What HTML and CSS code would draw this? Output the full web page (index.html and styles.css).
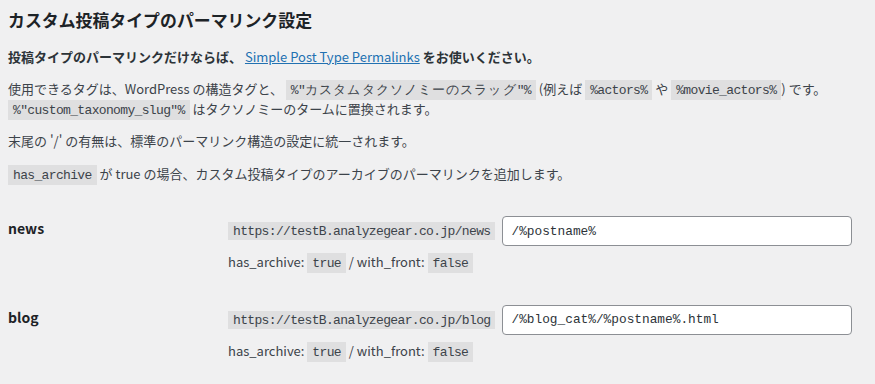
FILE: index.html
```html
<!DOCTYPE html>
<html lang="ja">
<head>
    <meta charset="UTF-8">
    <meta name="viewport" content="width=device-width, initial-scale=1.0">
    <title>カスタム投稿タイプのパーマリンク設定</title>
    <link rel="stylesheet" href="styles.css">
</head>
<body>

<div class="wrap">
    <h2>カスタム投稿タイプのパーマリンク設定</h2>
    <p><strong>投稿タイプのパーマリンクだけならば、 <a href="#">Simple Post Type Permalinks</a> をお使いください。</strong></p>
    <p>使用できるタグは、WordPress の構造タグと、 <code>%"<span class="jp">カスタムタクソノミーのスラッグ</span>"%</code> (例えば <code>%actors%</code> や <code>%movie_actors%</code>) です。 <code>%"custom_taxonomy_slug"%</code> はタクソノミーのタームに置換されます。</p>
    <p>末尾の '/' の有無は、標準のパーマリンク構造の設定に統一されます。</p>
    <p><code>has_archive</code> が true の場合、カスタム投稿タイプのアーカイブのパーマリンクを追加します。</p>

    <table class="form-table">
        <tbody>
            <tr>
                <th><label for="news_structure">news</label></th>
                <td>
                    <div class="permalink">
                        <code>https://testB.analyzegear.co.jp/news</code>
                        <input type="text" id="news_structure" class="regular-text" value="/%postname%">
                    </div>
                    <p class="description">has_archive: <code>true</code> / with_front: <code>false</code></p>
                </td>
            </tr>
            <tr>
                <th><label for="blog_structure">blog</label></th>
                <td>
                    <div class="permalink">
                        <code>https://testB.analyzegear.co.jp/blog</code>
                        <input type="text" id="blog_structure" class="regular-text" value="/%blog_cat%/%postname%.html">
                    </div>
                    <p class="description">has_archive: <code>true</code> / with_front: <code>false</code></p>
                </td>
            </tr>
        </tbody>
    </table>
</div>

</body>
</html>
```

FILE: styles.css
```css
body {
    margin: 0;
    background-color: #f0f0f1;
    color: #3c434a;
    font-family: "Noto Sans CJK JP", "Noto Sans", sans-serif;
    font-size: 13px;
    line-height: 1.4;
}
.wrap {
    padding: 9px 8px 0;
}
.wrap h2 {
    font-size: 16.9px;
    font-weight: 600;
    color: #1d2327;
    line-height: 1.3;
    margin: 0 0 16px;
}
.wrap p {
    margin: 13px 0;
    line-height: 1.5;
}
.wrap strong {
    font-weight: 600;
    color: #2c3338;
}
.wrap a {
    color: #2271b1;
    font-weight: 400;
    text-decoration: underline;
}
code {
    font-family: "Liberation Mono", monospace;
    font-size: 13px;
    line-height: 1;
    letter-spacing: -0.65px;
    background-color: rgba(0, 0, 0, 0.07);
    padding: 3px 5px 2px;
}
code .jp {
    letter-spacing: 1.1px;
}
.form-table {
    border-collapse: collapse;
    width: 100%;
    margin-top: 18px;
}
.form-table th {
    width: 200px;
    padding: 18px 10px 20px 0;
    text-align: left;
    vertical-align: top;
    font-size: 14px;
    font-weight: 600;
    color: #1d2327;
    line-height: 1.3;
}
.form-table td {
    padding: 15px 10px 18px;
    vertical-align: top;
    line-height: 1.3;
}
.permalink {
    display: flex;
    align-items: center;
    gap: 7px;
}
.permalink input {
    box-sizing: border-box;
    width: 350px;
    height: 30px;
    padding: 0 8px;
    border: 1px solid #8c8f94;
    border-radius: 4px;
    background-color: #fff;
    color: #2c3338;
    font-family: "Liberation Mono", monospace;
    font-size: 12.8px;
}
.form-table .description {
    margin: 6px 0 0;
    line-height: 1.5;
}
```
